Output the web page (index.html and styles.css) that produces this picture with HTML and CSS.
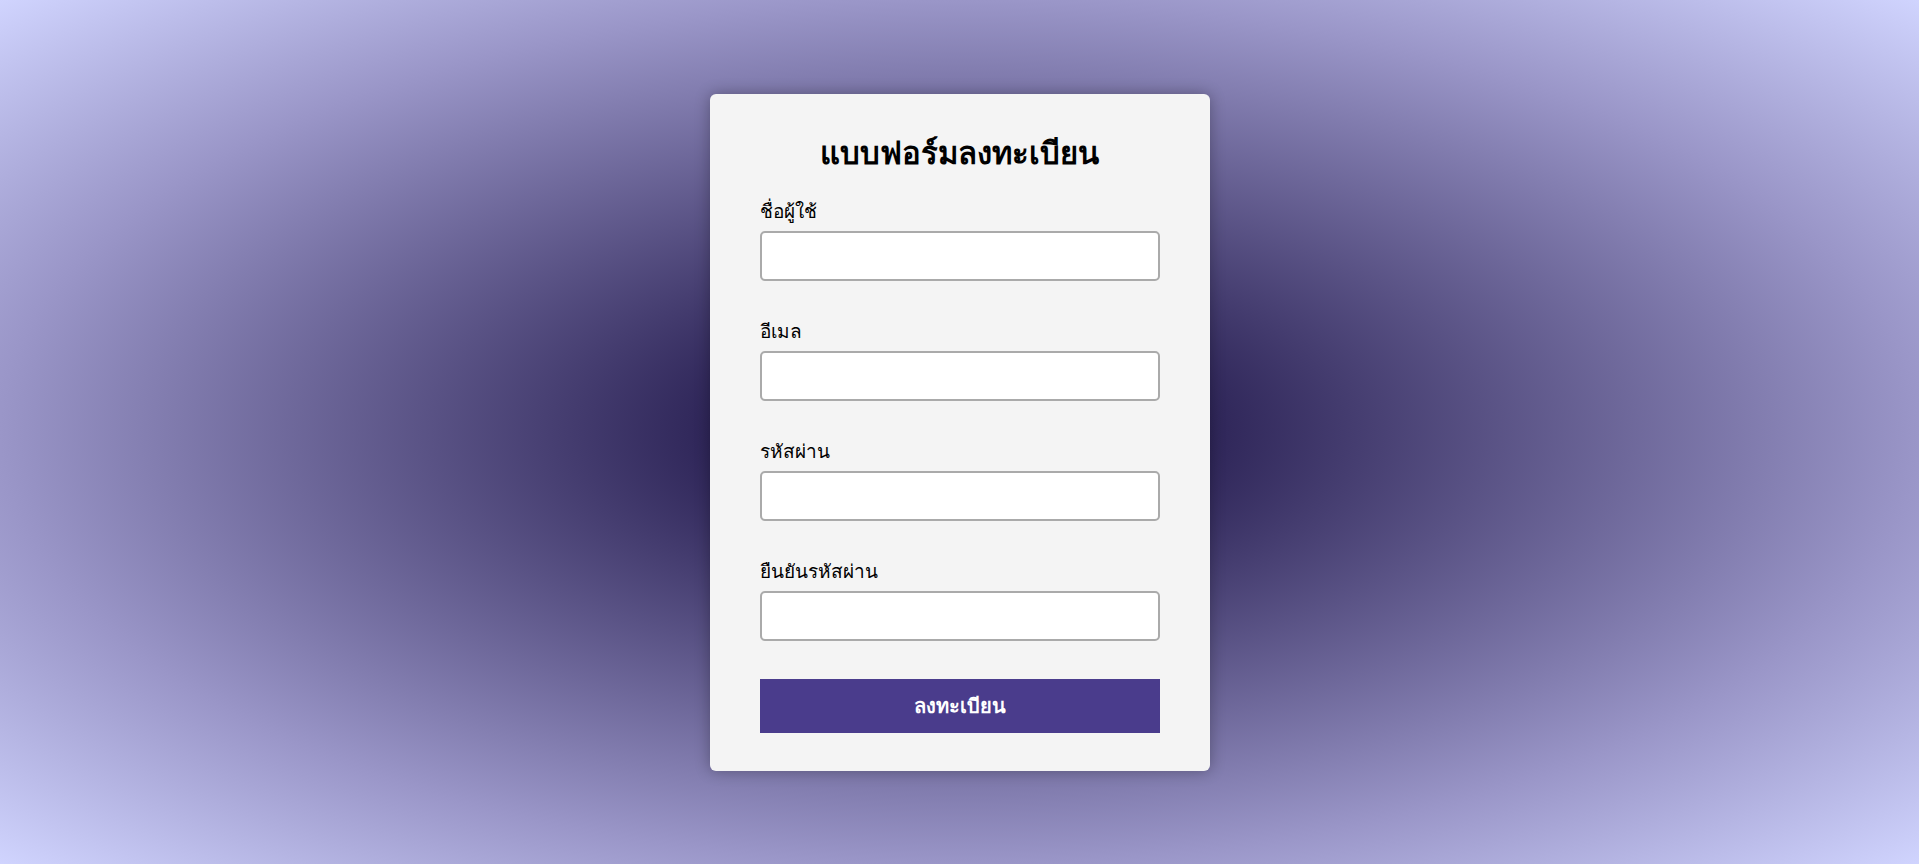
FILE: index.html
```html
<!DOCTYPE html>
<html lang="th">
<head>
<meta charset="utf-8">
<title>แบบฟอร์มลงทะเบียน</title>
<link rel="stylesheet" href="styles.css">
</head>
<body>
<main class="page">
  <form class="card">
    <h2 class="title">แบบฟอร์มลงทะเบียน</h2>
    <div class="field">
      <label class="label" for="u">ชื่อผู้ใช้</label>
      <input class="input" id="u" type="text">
    </div>
    <div class="field">
      <label class="label" for="e">อีเมล</label>
      <input class="input" id="e" type="email">
    </div>
    <div class="field">
      <label class="label" for="p">รหัสผ่าน</label>
      <input class="input" id="p" type="password">
    </div>
    <div class="field">
      <label class="label" for="c">ยืนยันรหัสผ่าน</label>
      <input class="input" id="c" type="password">
    </div>
    <button class="submit" type="button">ลงทะเบียน</button>
  </form>
</main>
</body>
</html>
```

FILE: styles.css
```css
html, body {
  margin: 0;
  padding: 0;
  height: 100%;
}
body {
  font-family: "Liberation Sans", Arial, sans-serif;
  background: radial-gradient(ellipse farthest-corner at 50% 50%,
    #130a3e 0%, #2e2558 18%, #9a96c8 70.7%, #d0d4fe 100%);
}
.page {
  min-height: 100vh;
  display: flex;
  align-items: center;
  justify-content: center;
}
.card {
  width: 500px;
  box-sizing: border-box;
  padding: 40px 50px 38px;
  background: #f4f4f4;
  border-radius: 6px;
  box-shadow: 0 0 15px rgba(0, 0, 0, 0.3);
  display: flex;
  flex-direction: column;
}
.title {
  margin: 0 0 25px;
  font-size: 31px;
  line-height: 40px;
  text-align: center;
  color: #000;
}
.field {
  display: flex;
  flex-direction: column;
  gap: 6px;
  margin-bottom: 38px;
}
.label {
  font-size: 19px;
  line-height: 26px;
  color: #000;
}
.input {
  height: 50px;
  box-sizing: border-box;
  border: 2px solid #aaaaaa;
  border-radius: 5px;
  background: #fff;
  font-size: 16px;
  padding: 0 10px;
  margin: 0;
}
.submit {
  height: 54px;
  border: none;
  background: #4a3c8c;
  color: #fff;
  font-family: inherit;
  font-size: 20px;
  font-weight: bold;
  margin: 0;
}
```
